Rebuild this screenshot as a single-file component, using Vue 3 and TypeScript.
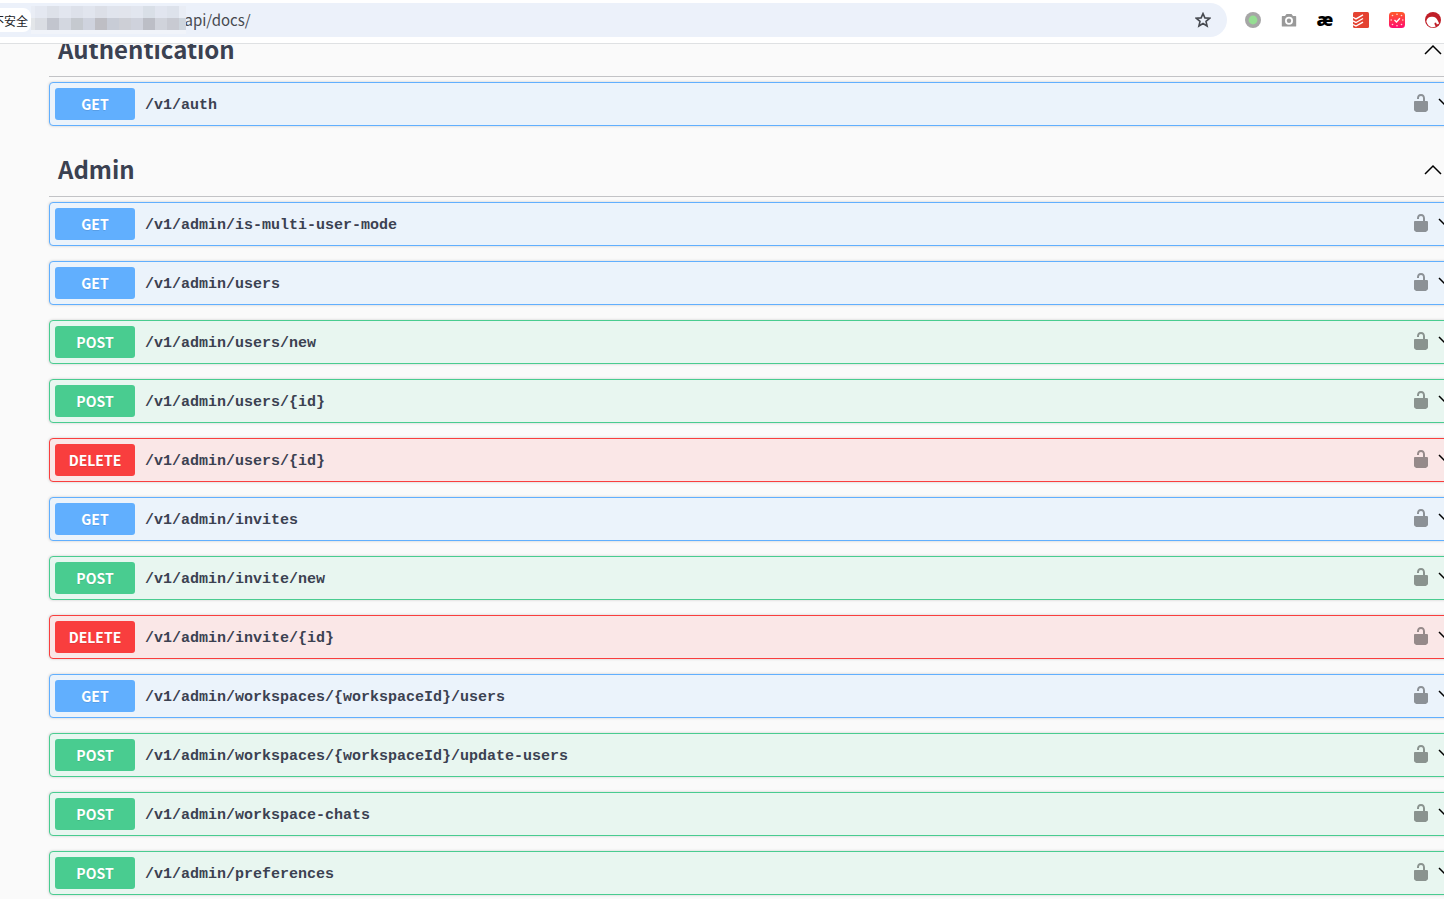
<script setup lang="ts">
type Method = 'get' | 'post' | 'delete'
interface Operation { method: Method; path: string }
interface Section { title: string; operations: Operation[] }

const sections: Section[] = [
  { title: 'Authentication', operations: [{ method: 'get', path: '/v1/auth' }] },
  {
    title: 'Admin',
    operations: [
      { method: 'get', path: '/v1/admin/is-multi-user-mode' },
      { method: 'get', path: '/v1/admin/users' },
      { method: 'post', path: '/v1/admin/users/new' },
      { method: 'post', path: '/v1/admin/users/{id}' },
      { method: 'delete', path: '/v1/admin/users/{id}' },
      { method: 'get', path: '/v1/admin/invites' },
      { method: 'post', path: '/v1/admin/invite/new' },
      { method: 'delete', path: '/v1/admin/invite/{id}' },
      { method: 'get', path: '/v1/admin/workspaces/{workspaceId}/users' },
      { method: 'post', path: '/v1/admin/workspaces/{workspaceId}/update-users' },
      { method: 'post', path: '/v1/admin/workspace-chats' },
      { method: 'post', path: '/v1/admin/preferences' },
    ],
  },
]

const mosaicTop = ['#e4e8f1', '#dde1e9', '#e2e6ef', '#dde1ea', '#e1e5ee', '#dcdfe7', '#e0e4ed', '#e1e4ec', '#e2e6ef', '#d9dfe7', '#e1e5ef', '#dde2eb', '#dee2ec']
const mosaicBottom = ['#dadde3', '#c2c5ce', '#d3d7e0', '#c5c9cf', '#cfd3de', '#bebec4', '#c8ccd6', '#cdcfd6', '#cfd2dc', '#bcbec6', '#d0d3db', '#c8cad2', '#ced5dd']
</script>

<template>
  <div class="window">
    <header class="toolbar">
      <div class="address">
        <button class="security" type="button"><span>不安全</span></button>
        <svg class="mosaic" width="155" height="28" viewBox="0 0 155 28" shape-rendering="crispEdges" aria-hidden="true">
          <rect width="155" height="28" fill="#f1f4fa" />
          <rect width="4" height="12" fill="#e9edf5" />
          <rect y="12" width="4" height="12" fill="#e3e6e9" />
          <g v-for="(color, i) in mosaicTop" :key="i">
            <rect :x="4 + i * 12" width="12" height="12" :fill="color" />
            <rect :x="4 + i * 12" y="12" width="12" height="12" :fill="mosaicBottom[i]" />
          </g>
          <rect x="148" width="7" height="12" fill="#e9edf5" />
        </svg>
        <span class="url">/api/docs/</span>
        <button class="star" type="button" aria-label="Bookmark">
          <svg width="16" height="16" viewBox="0 0 16 16"><path d="M8 1.600l1.900 4.300 4.700.4-3.600 3.100 1.100 4.600L8 11.500 3.900 14 5 9.400 1.400 6.300l4.700-.4z" fill="none" stroke="#474a50" stroke-width="1.600" /></svg>
        </button>
      </div>
      <nav class="extensions" aria-label="Extensions">
        <button type="button" aria-label="Status">
          <svg width="16" height="16" viewBox="0 0 16 16"><circle cx="8" cy="8" r="8" fill="#a6a6a6" /><circle cx="8" cy="8" r="4.4" fill="#95de92" /></svg>
        </button>
        <button type="button" aria-label="Screenshot">
          <svg width="16" height="16" viewBox="0 0 16 16"><path d="M1.500 4H4l1.500-2h5L12 4h2.500c.4 0 .7.3.7.7v9.200c0 .4-.3.700-.7.700h-13c-.4 0-.7-.3-.7-.7V4.700c0-.4.3-.7.7-.7z" fill="#999" /><circle cx="8" cy="8.800" r="4" fill="#fff" /><circle cx="8" cy="8.800" r="2.200" fill="#999" /></svg>
        </button>
        <button class="ae" type="button">æ</button>
        <button type="button" aria-label="Tasks">
          <svg width="16" height="16" viewBox="0 0 16 16"><rect width="16" height="16" rx="1.5" fill="#e44332" /><path d="M0 5.300l3 1.600 7-4M0 8.900l3 1.600 7-4M0 12.500l3 1.600 7-4" fill="none" stroke="#fff" stroke-width="1.300" /></svg>
        </button>
        <button type="button" aria-label="Timer">
          <svg width="16" height="16" viewBox="0 0 16 16">
            <defs><linearGradient id="timer" x2="0" y2="1"><stop stop-color="#ff5b29" /><stop offset="1" stop-color="#ff0b70" /></linearGradient></defs>
            <rect width="16" height="16" rx="3.5" fill="url(#timer)" />
            <path d="M5.5 8l2 2 3.4-3.8" fill="none" stroke="#fff" stroke-width="1.3" />
            <g fill="#ffd9d5"><circle cx="8" cy="2.2" r=".8" /><circle cx="8" cy="13.8" r=".8" /><circle cx="2.2" cy="8" r=".8" /><circle cx="13.8" cy="8" r=".8" /><circle cx="3.5" cy="3.5" r=".8" /><circle cx="12.5" cy="3.5" r=".8" /><circle cx="3.5" cy="12.5" r=".8" /><circle cx="12.5" cy="12.5" r=".8" /></g>
          </svg>
        </button>
        <button type="button" aria-label="Reader">
          <svg width="16" height="16" viewBox="0 0 16 16"><circle cx="8" cy="8" r="8" fill="#c01f28" /><path d="M1.3 9.2C2 5.8 4.6 4.5 7.4 4.8c2.6.2 4.4 1.4 5.3 3.6l1.5 3.1-2.3 1-.9-1.9c-1.5.2-1.8.8-1.3 1.8l1 2.2c-4.5 1.800-8.1-.5-9.4-5.4z" fill="#fff" /></svg>
        </button>
      </nav>
    </header>

    <main class="docs">
      <section v-for="section in sections" :key="section.title" class="section">
        <h3 class="title">
          <a href="#">{{ section.title }}</a>
          <button type="button" :aria-label="`Collapse ${section.title}`">
            <svg width="20" height="20" viewBox="0 0 20 20"><path d="M2 14l8-8 8 8" fill="none" stroke="#000" stroke-width="1.5" /></svg>
          </button>
        </h3>
        <div v-for="op in section.operations" :key="op.method + op.path" class="operation" :class="op.method">
          <button class="summary" type="button">
            <span class="method">{{ op.method.toUpperCase() }}</span>
            <span class="path">{{ op.path }}</span>
          </button>
          <button class="lock" type="button" aria-label="Authorize">
            <svg width="20" height="20" viewBox="0 0 20 20"><path d="M15.800 8H14V5.600C14 2.700 12.700 1 10 1 7.200 1 6 2.700 6 5.600V6h2v-.8C8 3.800 8.700 3 10 3s2 .7 2 2.200V8H4c-.6 0-1 .5-1 1.200v7.400c0 1 .8 1.800 1.800 2.100l.6.300h9.200l.6-.3c1-.3 1.800-1.100 1.800-2.100V9.200c0-.6-.5-1.200-1.200-1.200z" /></svg>
          </button>
          <button class="expand" type="button" aria-label="Expand">
            <svg width="20" height="20" viewBox="0 0 20 20"><path d="M2 6l8 8 8-8" fill="none" stroke="#000" stroke-width="1.5" /></svg>
          </button>
        </div>
      </section>
    </main>
  </div>
</template>

<style>
body { margin: 0; overflow: hidden; background: #fafafa; }
</style>

<style scoped>
.window {
  --sans: "Noto Sans CJK SC", "Noto Sans", sans-serif;
  height: 100vh;
  display: flex;
  flex-direction: column;
  overflow: hidden;
  font-family: var(--sans);
  color: #3b4151;
}
button { border: 0; padding: 0; margin: 0; background: none; font: inherit; color: inherit; cursor: pointer; }
svg { display: block; }

.toolbar {
  flex: none;
  height: 43px;
  display: flex;
  background: #fff;
  border-bottom: 1px solid #dfe1e3;
}
.address {
  flex: 1;
  height: 34px;
  margin-top: 3px;
  display: flex;
  align-items: center;
  background: #ecf1fa;
  border-radius: 0 17px 17px 0;
}
.security {
  width: 31px;
  height: 24px;
  display: flex;
  justify-content: flex-end;
  align-items: center;
  overflow: hidden;
  background: #fff;
  border-radius: 0 8px 8px 0;
  font-size: 12px;
  color: #202124;
}
.security span { flex: none; margin-right: 3px; }
.mosaic { flex: none; position: relative; z-index: 1; }
.url { flex: 1; margin-left: -7px; font-size: 15px; line-height: 20px; color: #474a50; }
.star { margin-right: 16px; }
.extensions {
  flex: none;
  height: 40px;
  margin-left: 18px;
  margin-right: 3px;
  display: flex;
  align-items: center;
  gap: 20px;
}
.extensions button { width: 16px; height: 16px; display: flex; align-items: center; justify-content: center; }
.extensions .ae { padding-bottom: 2px; font: 800 18px/16px "Open Sans", sans-serif; color: #000; }

.docs { flex: 1; min-height: 0; overflow: hidden; padding-left: 49px; }
.section { display: flow-root; margin-bottom: 2px; }
.section:first-child { margin-top: -21px; }
.title {
  height: 53px;
  margin: 0 0 5px;
  display: flex;
  align-items: center;
  justify-content: space-between;
  border-bottom: 1px solid #c2c3c6;
  font-size: 24px;
  line-height: 36px;
}
.title a { margin-left: 9px; padding-bottom: 2px; color: inherit; text-decoration: none; }
.title button { margin-right: 1px; }
.operation {
  height: 42px;
  margin: 0 -16px 15px 0;
  display: flex;
  align-items: center;
  border: 1px solid;
  border-radius: 4px;
  box-shadow: 0 0 3px rgba(0, 0, 0, 0.19);
}
.get { --tone: #61affe; background: #ebf3fb; border-color: var(--tone); }
.post { --tone: #49cc90; background: #e8f6f0; border-color: var(--tone); }
.delete { --tone: #f93e3e; background: #fae7e7; border-color: var(--tone); }
.summary { flex: 1; display: flex; align-items: center; padding-left: 5px; text-align: left; }
.method {
  width: 80px;
  height: 32px;
  border-radius: 3px;
  background: var(--tone);
  color: #fff;
  font-size: 14px;
  font-weight: 700;
  line-height: 32px;
  text-align: center;
  text-shadow: 0 1px 0 rgba(0, 0, 0, 0.1);
}
.path { margin-left: 10px; padding-top: 4px; font: 700 15px/20px "Liberation Mono", monospace; }
.lock { margin-right: 6px; padding-bottom: 2px; opacity: 0.4; }
.expand { margin-right: 2px; padding-bottom: 2px; }
</style>
